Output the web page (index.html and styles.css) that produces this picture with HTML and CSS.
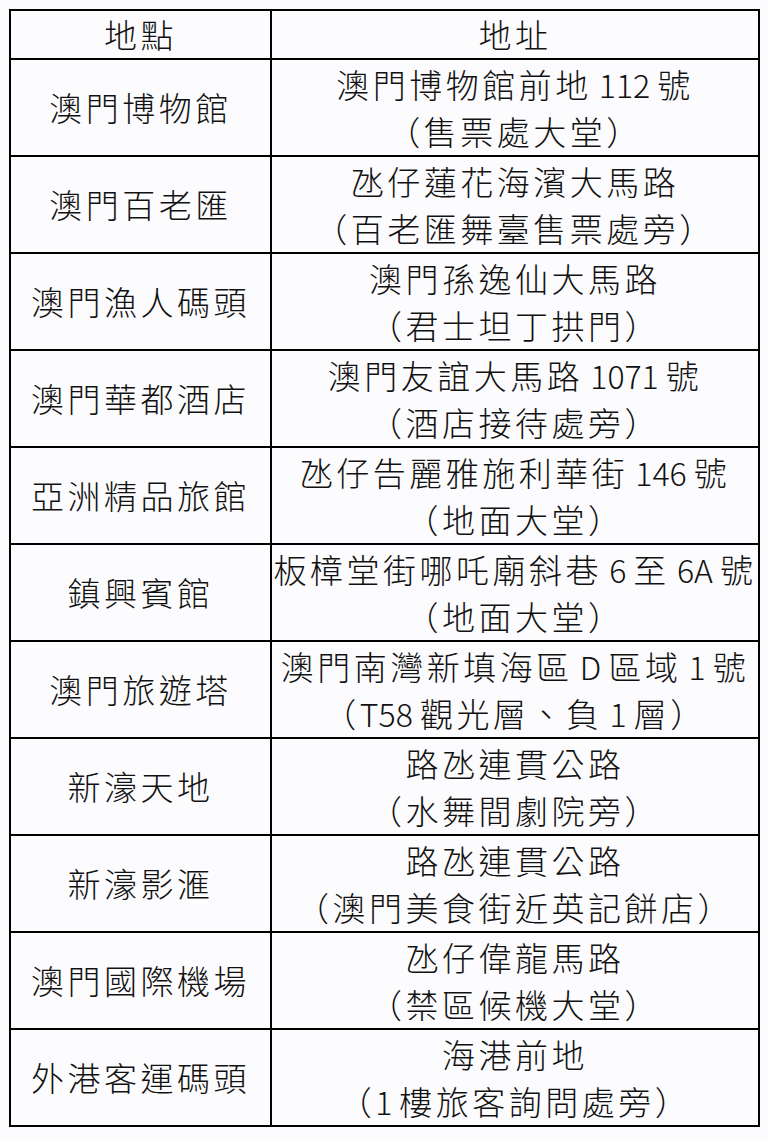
FILE: index.html
```html
<!DOCTYPE html>
<html lang="zh-Hant">
<head>
<meta charset="utf-8">
<link rel="stylesheet" href="styles.css">
</head>
<body>
<table class="tbl">
  <thead>
    <tr><th class="c-place">地點</th><th class="c-addr">地址</th></tr>
  </thead>
  <tbody>
    <tr><td>澳門博物館</td><td>澳門博物館前地<span class="lat"> 112 </span>號<br>（售票處大堂）</td></tr>
    <tr><td>澳門百老匯</td><td>氹仔蓮花海濱大馬路<br>（百老匯舞臺售票處旁）</td></tr>
    <tr><td>澳門漁人碼頭</td><td>澳門孫逸仙大馬路<br>（君士坦丁拱門）</td></tr>
    <tr><td>澳門華都酒店</td><td>澳門友誼大馬路<span class="lat"> 1071 </span>號<br>（酒店接待處旁）</td></tr>
    <tr><td>亞洲精品旅館</td><td>氹仔告麗雅施利華街<span class="lat"> 146 </span>號<br>（地面大堂）</td></tr>
    <tr><td>鎮興賓館</td><td>板樟堂街哪吒廟斜巷<span class="lat"> 6 </span>至<span class="lat"> 6A </span>號<br>（地面大堂）</td></tr>
    <tr><td>澳門旅遊塔</td><td>澳門南灣新填海區<span class="lat"> D </span>區域<span class="lat"> 1 </span>號<br>（<span class="lat">T58 </span>觀光層、負<span class="lat"> 1 </span>層）</td></tr>
    <tr><td>新濠天地</td><td>路氹連貫公路<br>（水舞間劇院旁）</td></tr>
    <tr><td>新濠影滙</td><td>路氹連貫公路<br>（澳門美食街近英記餅店）</td></tr>
    <tr><td>澳門國際機場</td><td>氹仔偉龍馬路<br>（禁區候機大堂）</td></tr>
    <tr><td>外港客運碼頭</td><td>海港前地<br>（<span class="lat">1 </span>樓旅客詢問處旁）</td></tr>
  </tbody>
</table>
</body>
</html>
```
FILE: styles.css
```css
html, body {
  margin: 0;
  padding: 0;
  background: #fcfbfd;
}
body {
  padding: 9px 0 0 9px;
  font-family: "Noto Sans CJK TC", sans-serif;
  font-weight: 300;
  color: #111;
}
.tbl {
  border-collapse: collapse;
  width: 751px;
  table-layout: fixed;
}
.c-place { width: 259px; }
.tbl th, .tbl td {
  border: 2px solid #000;
  padding: 0;
  text-align: center;
  vertical-align: middle;
  font-size: 33px;
  letter-spacing: 3.5px;
  line-height: 47px;
  font-weight: 300;
  white-space: nowrap;
}
.tbl th {
  height: 47px;
}
.tbl td {
  height: 95px;
}
.lat {
  font-size: 32px;
  letter-spacing: 0;
}
```
